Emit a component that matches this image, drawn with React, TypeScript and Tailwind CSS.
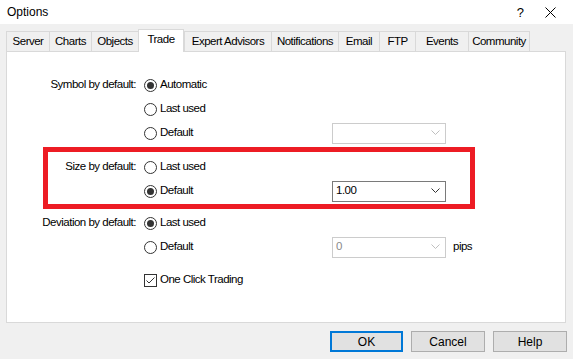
import React from 'react';

const tabs: [string, number][] = [
  ['Server', 43],
  ['Charts', 42],
  ['Objects', 47],
  ['Trade', 46],
  ['Expert Advisors', 87],
  ['Notifications', 67],
  ['Email', 41],
  ['FTP', 36],
  ['Events', 53],
  ['Community', 61],
];

const Radio: React.FC<{ checked?: boolean; label: string }> = ({ checked, label }) => (
  <div className="flex items-center gap-[3px]">
    <div className="w-[13px] h-[13px] rounded-full border border-[#333] bg-white flex items-center justify-center">
      {checked && <div className="w-[7px] h-[7px] rounded-full bg-[#333]" />}
    </div>
    <span>{label}</span>
  </div>
);

const Combo: React.FC<{ value?: string; disabled?: boolean }> = ({ value, disabled }) => (
  <div
    className={
      disabled
        ? 'w-[114px] h-[21px] border border-[#cccccc] bg-white flex items-center justify-between pl-[3px] pr-[5px] text-[#8a8a8a]'
        : 'w-[114px] h-[21px] border border-[#7a7a7a] bg-white flex items-center justify-between pl-[3px] pr-[5px] text-black'
    }
  >
    <span>{value}</span>
    <svg width="9" height="6" viewBox="0 0 9 6">
      <polyline points="0.5,0.5 4.5,4.5 8.5,0.5" fill="none" stroke={disabled ? '#bfbfbf' : '#333'} strokeWidth="1" />
    </svg>
  </div>
);

// one settings row: label | radio | combo | suffix
const Row: React.FC<{ label?: string; children?: React.ReactNode; combo?: React.ReactNode; suffix?: string }> = ({
  label,
  children,
  combo,
  suffix,
}) => (
  <div className="flex items-center h-[24px]">
    <div className="w-[130px] text-right pr-[1px]">{label}</div>
    <div className="w-[195px] pl-[7px]">{children}</div>
    {combo}
    {suffix && <span className="ml-[7px]">{suffix}</span>}
  </div>
);

export default function App() {
  return (
    <div
      className="w-[573px] h-[359px] bg-[#f0f0f0] text-[11.5px] tracking-[-0.5px] text-black leading-none overflow-hidden"
      style={{ fontFamily: '"Liberation Sans", Arial, sans-serif' }}
    >
      {/* Title bar */}
      <div className="h-[24px] bg-white flex items-center pl-[7px] tracking-normal">
        <span className="text-[12px]">Options</span>
        <span className="ml-auto mr-[21px] text-[13px]">?</span>
        <svg width="11" height="11" viewBox="0 0 11 11" className="mr-[17px]">
          <path d="M0.5 0.5 L10.5 10.5 M10.5 0.5 L0.5 10.5" stroke="#000" strokeWidth="1" />
        </svg>
      </div>

      {/* Tabs */}
      <div className="flex items-end h-[27px] pl-[6px]">
        {tabs.map(([name, w]) => {
          const active = name === 'Trade';
          return active ? (
            <div
              key={name}
              style={{ width: w }}
              className="relative z-10 h-[23px] -mb-px bg-white border border-b-0 border-[#d9d9d9] flex items-center justify-center pb-[2px]"
            >
              {name}
            </div>
          ) : (
            <div
              key={name}
              style={{ width: w + 1 }}
              className="h-[20px] bg-[#f0f0f0] border border-b-0 border-[#d9d9d9] -mr-px flex items-center justify-center pt-px"
            >
              {name}
            </div>
          );
        })}
      </div>

      {/* Panel */}
      <div className="relative ml-[6px] w-[560px] h-[272px] bg-white border border-[#d9d9d9] pt-[21px]">
        <Row label="Symbol by default:">
          <Radio checked label="Automatic" />
        </Row>
        <Row>
          <Radio label="Last used" />
        </Row>
        <Row combo={<Combo disabled />}>
          <Radio label="Default" />
        </Row>

        <div className="mt-[10px]">
          <Row label="Size by default:">
            <Radio label="Last used" />
          </Row>
          <Row combo={<Combo value="1.00" />}>
            <Radio checked label="Default" />
          </Row>
        </div>

        <div className="mt-[8px]">
          <Row label="Deviation by default:">
            <Radio checked label="Last used" />
          </Row>
          <Row combo={<Combo value="0" disabled />} suffix="pips">
            <Radio label="Default" />
          </Row>
        </div>

        <div className="mt-[9px]">
          <Row>
            <div className="flex items-center gap-[3px]">
              <div className="w-[13px] h-[13px] border border-[#333] bg-white flex items-center justify-center">
                <svg width="11" height="11" viewBox="0 0 11 11">
                  <polyline points="1.5,5.5 4,8 9.5,2.5" fill="none" stroke="#333" strokeWidth="1" />
                </svg>
              </div>
              <span>One Click Trading</span>
            </div>
          </Row>
        </div>

        {/* red highlight annotation */}
        <div className="absolute left-[36px] top-[95px] w-[432px] h-[62px] border-[5px] border-[#ed1c24]" />
      </div>

      {/* Buttons */}
      <div className="flex justify-end gap-[8px] pr-[6px] mt-[8px] text-[12px] tracking-normal">
        <button className="w-[73px] h-[21px] bg-[#e1e1e1] border-2 border-[#0078d7]">OK</button>
        <button className="w-[74px] h-[21px] bg-[#e1e1e1] border border-[#adadad]">Cancel</button>
        <button className="w-[74px] h-[21px] bg-[#e1e1e1] border border-[#adadad]">Help</button>
      </div>
    </div>
  );
}
